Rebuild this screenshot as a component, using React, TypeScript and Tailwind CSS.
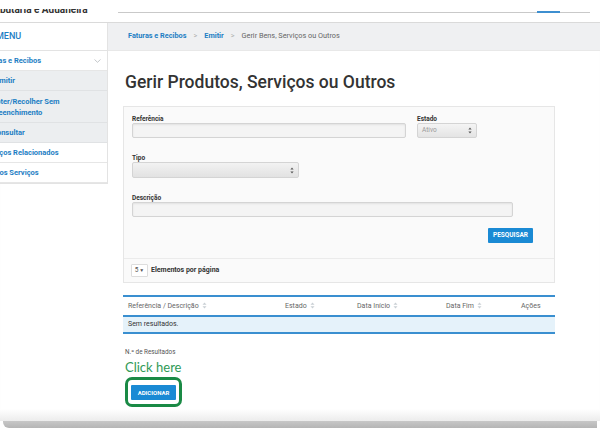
import React from "react";

const SortIcon = () => (
  <svg width="5" height="7" viewBox="0 0 5 7" className="inline-block ml-[3px] align-middle">
    <path d="M2.5 0.5 L4.5 2.8 L0.5 2.8 Z" fill="#c9cfd4" />
    <path d="M2.5 6.5 L4.5 4.2 L0.5 4.2 Z" fill="#c9cfd4" />
  </svg>
);

const SelectArrows = () => (
  <svg width="4" height="7" viewBox="0 0 4 7">
    <path d="M2 0.5 L3.6 2.6 L0.4 2.6 Z" fill="#555" />
    <path d="M2 6.5 L3.6 4.4 L0.4 4.4 Z" fill="#555" />
  </svg>
);

type NavItem = { label: string; sub?: boolean; shift: number; tall?: boolean };

const NAV: NavItem[] = [
  { label: "Emitir", sub: true, shift: 5 },
  { label: "Obter/Recolher Sem Preenchimento", sub: true, shift: 9, tall: true },
  { label: "Consultar", sub: true, shift: 8 },
  { label: "Serviços Relacionados", shift: 18 },
  { label: "Todos os Serviços", shift: 23 },
];

const inputCls =
  "h-[15px] border border-[#d4d4d4] rounded-[2px] bg-[#f4f4f4] shadow-[inset_0_1px_2px_rgba(0,0,0,0.08)]";

export default function App() {
  return (
    <div className="w-[600px] h-[428px] overflow-hidden bg-white flex flex-col font-['Roboto',sans-serif]">
      {/* top strip, cut off by the capture */}
      <div className="h-[22px] shrink-0 flex items-start">
        <div className="w-[118px] shrink-0 mt-[9px] h-[7px] overflow-hidden">
          <div className="-mt-[5px] -ml-[64px] text-[10px] font-bold text-[#333] whitespace-nowrap leading-[12px]">
            Autoridade Tributária e Aduaneira
          </div>
        </div>
        <div className="mt-[12px] w-[472px] h-[1px] bg-[#c9c9c9] flex">
          <div className="ml-[419px] w-[23px] h-[2px] -mt-[1px] bg-[#3d8fd0]" />
        </div>
      </div>

      <div className="flex flex-1 border-t border-[#dadada] shadow-[inset_0_1px_1px_rgba(0,0,0,0.06)]">
        {/* sidebar */}
        <aside className="w-[108px] shrink-0 self-start overflow-hidden border-r border-b border-[#e3e3e3] bg-white">
          <div className="h-[28px] flex items-center border-b border-[#e3e3e3]">
            <span className="-ml-[4px] text-[9px] font-medium text-[#1d7ec4] whitespace-nowrap">MENU</span>
          </div>
          <div className="h-[20px] flex items-center justify-between border-b border-[#e6e6e6] pr-[6px]">
            <span className="-ml-[19px] text-[7.5px] font-bold text-[#1d7ec4] whitespace-nowrap">Faturas e Recibos</span>
            <svg width="7" height="4" viewBox="0 0 7 4">
              <path d="M0.5 0.5 L3.5 3.3 L6.5 0.5" stroke="#b5b9bd" strokeWidth="0.8" fill="none" />
            </svg>
          </div>
          {NAV.map((item) => (
            <div
              key={item.label}
              className={
                item.sub
                  ? item.tall
                    ? "h-[32px] flex items-center bg-[#eceef0] border-b border-[#e0e2e4]"
                    : "h-[20px] flex items-center bg-[#eceef0] border-b border-[#e0e2e4]"
                  : "h-[20px] flex items-center bg-white border-b border-[#e6e6e6]"
              }
            >
              <span
                className="text-[7.5px] font-bold text-[#1d7ec4] leading-[11px]"
                style={{ marginLeft: -item.shift, maxWidth: item.tall ? 118 : undefined }}
              >
                {item.label}
              </span>
            </div>
          ))}
        </aside>

        {/* main */}
        <main className="flex-1 flex flex-col">
          <div className="h-[28px] bg-[#eff0f2] flex items-center pl-[20px] gap-[7px] text-[7.3px] border-b border-[#e8e8e8]">
            <span className="font-bold text-[#1d7ec4]">Faturas e Recibos</span>
            <span className="text-[#b0b0b0]">&gt;</span>
            <span className="font-bold text-[#1d7ec4]">Emitir</span>
            <span className="text-[#b0b0b0]">&gt;</span>
            <span className="text-[#666]">Gerir Bens, Serviços ou Outros</span>
          </div>

          <div className="pl-[15px] pr-[45px]">
            <h1 className="mt-[19px] pl-[2px] text-[17.5px] font-medium text-[#333] leading-[24px]">
              Gerir Produtos, Serviços ou Outros
            </h1>

            {/* filter panel */}
            <div className="mt-[12px] border border-[#e6e6e6] bg-[#fafafa]">
              <div className="pt-[8px] pl-[8px] pr-[21px]">
                <div className="flex gap-[11px]">
                  <div className="w-[274px]">
                    <div className="text-[6.5px] font-bold text-[#333] leading-[8px]">Referência</div>
                    <div className={`w-[274px] ${inputCls}`} />
                  </div>
                  <div>
                    <div className="text-[6.5px] font-bold text-[#333] leading-[8px]">Estado</div>
                    <div className="w-[60px] h-[15px] border border-[#d4d4d4] rounded-[2px] flex items-center justify-between px-[4px] bg-gradient-to-b from-[#f4f4f4] to-[#e4e4e4]">
                      <span className="text-[6.5px] text-[#999]">Ativo</span>
                      <SelectArrows />
                    </div>
                  </div>
                </div>

                <div className="mt-[16px] text-[6.5px] font-bold text-[#333] leading-[8px]">Tipo</div>
                <div className="w-[167px] h-[16px] border border-[#d4d4d4] rounded-[2px] bg-gradient-to-b from-[#f2f2f2] to-[#e2e2e2] flex items-center justify-end pr-[4px]">
                  <SelectArrows />
                </div>

                <div className="mt-[16px] text-[6.5px] font-bold text-[#333] leading-[8px]">Descrição</div>
                <div className={`w-[381px] ${inputCls}`} />

                <div className="mt-[11px] flex justify-end">
                  <button className="h-[15px] w-[45px] bg-[#1a8ad4] text-white text-[6.5px] font-bold rounded-[1px]">
                    PESQUISAR
                  </button>
                </div>
              </div>
              <div className="mt-[15px] border-t border-[#ebebeb] h-[24px] flex items-center pl-[7px] gap-[3px]">
                <div className="h-[13px] w-[17px] border border-[#ddd] bg-white rounded-[1px] flex items-center justify-center gap-[1px] text-[6.5px] text-[#555]">
                  5<span className="text-[5px]">▼</span>
                </div>
                <span className="text-[7px] font-bold text-[#333]">Elementos por página</span>
              </div>
            </div>

            {/* results table */}
            <div className="mt-[12px] border-t-2 border-[#3a8fd0]">
              <div className="h-[20px] flex items-center text-[7px] text-[#666] border-b-2 border-[#3a8fd0]">
                <div className="w-[162px] pl-[5px]">Referência / Descrição<SortIcon /></div>
                <div className="w-[72px]">Estado<SortIcon /></div>
                <div className="w-[89px]">Data Início<SortIcon /></div>
                <div className="w-[75px]">Data Fim<SortIcon /></div>
                <div>Ações</div>
              </div>
              <div className="h-[17px] flex items-center pl-[5px] bg-[#e5f2fa] text-[7px] text-[#333] border-b-2 border-[#3a8fd0]">
                Sem resultados.
              </div>
            </div>

            <div className="mt-[14px] pl-[2px] text-[6.3px] text-[#555]">N.º de Resultados</div>
            <div className="mt-[3px] pl-[2px] font-['Lato',sans-serif] text-[13px] leading-[15px] text-[#2f9a56]">
              Click here
            </div>
            <div className="mt-[2px] ml-[2px] w-[57px] h-[30px] border-[3px] border-[#1a8a45] rounded-[7px] flex items-center justify-center">
              <button className="h-[15px] w-[45px] bg-[#1a8ad4] text-white text-[6px] font-bold rounded-[1px]">
                ADICIONAR
              </button>
            </div>
          </div>
        </main>
      </div>

      {/* photo edge */}
      <div className="h-[12px] shrink-0 bg-gradient-to-b from-white to-[#ececec]" />
      <div className="h-[7px] shrink-0 mx-[3px] rounded-bl-[6px] bg-gradient-to-b from-[#c7c7c7] to-[#b5b5b5]" />
    </div>
  );
}
